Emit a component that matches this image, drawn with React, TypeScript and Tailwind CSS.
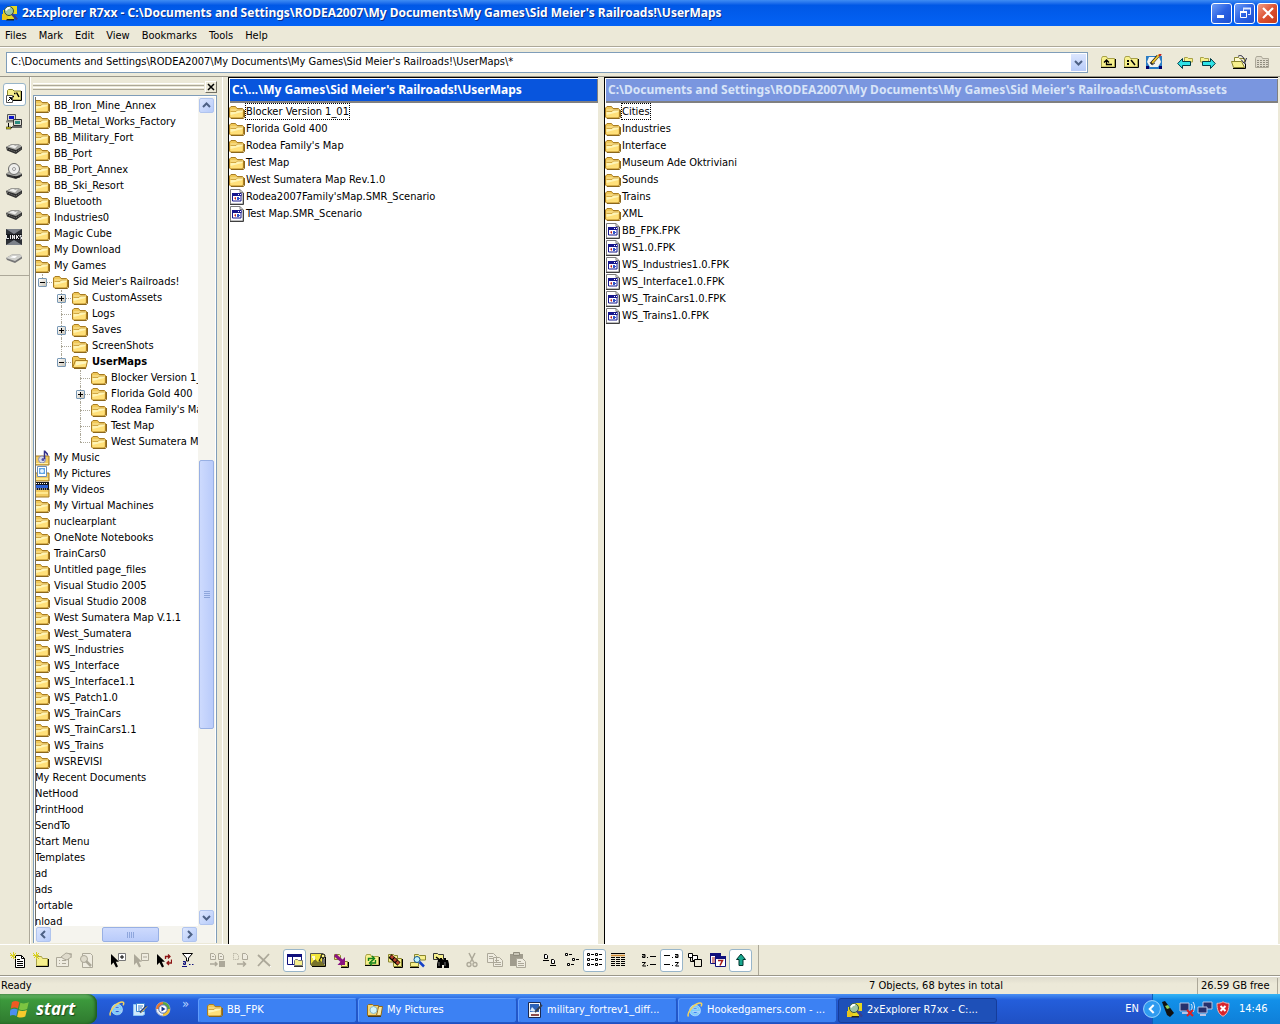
import { useState } from "react";
import type { ReactNode } from "react";
import clsx from "clsx";

type IconProps = { className?: string };

function Svg({ children, className, size = 16 }: IconProps & { children: ReactNode; size?: number }) {
  return (
    <svg
      aria-hidden
      width={size}
      height={size}
      viewBox="0 0 16 16"
      fill="none"
      className={clsx("shrink-0", className)}
    >
      {children}
    </svg>
  );
}

/* ---------- folder and file icons ---------- */

function FolderIcon({ className }: IconProps) {
  return (
    <Svg className={className}>
      <path d="M.5 13V4l1.5-1.500h4.500l1.500 2h5.500l1 1V13l-1 1h-12z" fill="#f0c857" stroke="#a97d22" />
      <path d="M1.500 5.500h12v1h-12z" fill="#fbe9a4" />
      <path d="M1.500 7.500h5.500l1.500-1.500h5v6l-.8 1.300H1.500z" fill="#ffe07a" />
      <path d="M1.500 7.500h5.500l1.500-1.500h5v2l-12 3z" fill="#fff4b4" />
      <path d="M1.500 7.500h5.500l1.500-1.500h5" stroke="#c6982f" strokeWidth=".8" />
      <path d="M2 14.500h12.500l1-1V6" stroke="#8a661c" />
    </Svg>
  );
}

function OpenFolderIcon({ className }: IconProps) {
  return (
    <Svg className={className}>
      <path d="M.5 13V3.500l1-1h4.500L7.500 4.500h6V7" fill="#f0c857" stroke="#a97d22" />
      <path d="M.7 13.500 3.500 6.500h12l-1.500 7z" fill="#ffe07a" stroke="#a97d22" />
      <path d="M4 7.500h10.500l-.5 2-10.500 2z" fill="#fff7c2" />
      <path d="M2 14.500h12" stroke="#8a661c" />
    </Svg>
  );
}

function MusicFolderIcon() {
  return (
    <Svg>
      <path d="M1 6h14v9H1z" fill="#f2cc62" stroke="#a57b23" />
      <circle cx="8" cy="9.500" r="3.500" fill="#d9dcec" stroke="#8d8fae" />
      <path d="M10.500 9V.5c0 2 3.500 2 3 5" stroke="#34318a" strokeWidth="1.500" />
      <circle cx="9" cy="9.500" r="1.500" fill="#5551a8" />
      <path d="M2 13h12v1H2z" fill="#fff0a8" />
    </Svg>
  );
}

function PicturesFolderIcon() {
  return (
    <Svg>
      <path d="M1 7h14v8H1z" fill="#f2cc62" stroke="#a57b23" />
      <path d="M3.500 .5h9v10h-9z" fill="#fff" stroke="#6d8eb5" />
      <path d="M5 2h6v6H5z" fill="#5fa5e6" />
      <circle cx="8" cy="5" r="2" fill="#e8f4ff" />
      <path d="M2 12h12v2H2z" fill="#ffe890" />
    </Svg>
  );
}

function VideosFolderIcon() {
  return (
    <Svg>
      <path d="M1 7h14v8H1z" fill="#f2cc62" stroke="#a57b23" />
      <path d="M1 0h14v8H1z" fill="#15161c" />
      <path d="M2 3h12v3H2z" fill="#2f62d6" />
      <path d="M2 1.500h12M2 7h12" stroke="#fff" strokeDasharray="1 1" />
      <path d="M2 10h12v2H2z" fill="#ffe890" />
    </Svg>
  );
}

function ScenarioFileIcon({ className }: IconProps) {
  return (
    <Svg className={className}>
      <path d="M1.500 .5h9.500l3 3v11.500h-12.500z" fill="#fff" stroke="#7c7c7c" />
      <path d="M11 .5v3h3" stroke="#7c7c7c" />
      <path d="M14.500 4v11.500H1" stroke="#3f3f3f" />
      <path d="M3.500 4.500h8.500v7.500h-8.500z" fill="#fff" stroke="#16168c" />
      <path d="M3 4h9.500v3H3z" fill="#16168c" />
      <path d="M9 5h1v1H9zM11 5h1v1h-1z" fill="#fff" />
      <path d="M5 9l2-1v3z" fill="#c02020" />
      <path d="M8 8h2v3H8zM10 9h1v1h-1z" fill="#2f52c8" />
    </Svg>
  );
}

/* ---------- shortcut bar icons ---------- */

function BookmarkIcon() {
  return (
    <Svg>
      <path d="M1.500 12V3.500l1-1h4L8 4h7v9H2z" fill="#f7f08c" stroke="#8a8630" />
      <path d="M15.500 4v9.500H6" stroke="#000" />
      <path d="M8 6.500h1.500M10.500 5.500l2.500 4.500M7 9.500h1" stroke="#000" strokeWidth="1.500" />
      <path d="M.5 8.500h6v7h-6z" fill="#fff" stroke="#555" />
      <path d="M2 14l3-3M3 10.500h2.500V13" stroke="#000" />
    </Svg>
  );
}

function NetworkIcon() {
  return (
    <Svg>
      <path d="M1.500 .5h8v6h-8z" fill="#d8d8d0" stroke="#555" />
      <path d="M3 2h5v3H3z" fill="#0a12c8" />
      <path d="M0 7.500h10" stroke="#8a8a80" strokeWidth="2" />
      <path d="M7.500 5.500h8v6h-8z" fill="#d8d8d0" stroke="#333" />
      <path d="M9 7h5v3H9z" fill="#2c8c80" />
      <path d="M6 13h10" stroke="#666" strokeWidth="2" />
      <path d="M2.500 9v4.500H6" stroke="#000" />
      <path d="M0 13h5v2H0z" fill="#d6d02c" stroke="#000" strokeWidth=".5" />
    </Svg>
  );
}

function DriveIcon() {
  return (
    <Svg>
      <path d="M0 6l5-2.500h8l3 2v3L10 13 1 9.500z" fill="#2e2e2e" />
      <path d="M0 6l5-2.500h8l3 2L10 9z" fill="#a9a9a5" />
      <path d="M3 5.500l3-1.500h2l1 1 3-1-3 3.500z" fill="#ececea" />
      <path d="M1 7.500l8.500 3.500 6-3.500" stroke="#7f7f7c" strokeDasharray="1 1" />
    </Svg>
  );
}

function CdDriveIcon() {
  return (
    <Svg>
      <path d="M0 11l4-3h8l4 3v2l-6 3-9-2.500z" fill="#333" />
      <path d="M0 11l4-3h8l4 3-6 2.500z" fill="#a9a9a5" />
      <circle cx="8" cy="6" r="5.500" fill="#eeeeec" stroke="#6a6a68" />
      <circle cx="8" cy="6" r="1.500" fill="#fff" stroke="#999" />
      <path d="M8 14h6" stroke="#111" />
    </Svg>
  );
}

function LinksysIcon() {
  return (
    <Svg>
      <path d="M0 0h16v16H0z" fill="#2d3036" />
      <path d="M0 0l8 5 8-5zM0 16l8-5 8 5z" fill="#7d828a" />
      <path d="M0 5h16v6H0z" fill="#15171b" />
      <path d="M.5 6v3.500H3M4.500 6v4M6.500 10V6l2 4V6M10.500 6v4M13 6l-2 2 2 2M15.500 6.500h-1.500V8h1.500v2H14" stroke="#fff" strokeWidth=".9" />
    </Svg>
  );
}

function RemovableIcon() {
  return (
    <Svg>
      <path d="M0 7l6-3.500h8l2 2v2L9 12 1 9z" fill="#777" />
      <path d="M0 7l6-3.500h8l2 2L9 10z" fill="#d0d0cc" />
      <path d="M4 6.500l3-1.500h4l-2 2z" fill="#fff" />
    </Svg>
  );
}

/* ---------- toolbar icons ---------- */

const yellow = "#f7f08c";
const dim = "#aca899";

function YellowFolder({ children }: { children?: ReactNode }) {
  return (
    <Svg>
      <path d="M1.500 13V4.500l1-2h4l1 2h7V13z" fill={yellow} stroke="#a8a24a" />
      <path d="M1 13.500h14.500V5" stroke="#000" />
      {children}
    </Svg>
  );
}

const UpFolderIcon = () => (
  <YellowFolder>
    <path d="M6.500 6v4.500H12M4 8.500l2.500-2.500L9 8.500" stroke="#000" strokeWidth="1.300" />
  </YellowFolder>
);

const RootFolderIcon = () => (
  <YellowFolder>
    <path d="M4 6h2v2H4zM4 9h2v2H4z" fill="#000" />
    <path d="M8 6l4 5" stroke="#000" strokeWidth="1.500" />
  </YellowFolder>
);

const DesktopIcon = () => (
  <Svg>
    <path d="M0 2h16v13H0z" fill="#2a7cc4" />
    <path d="M0 12h3v3H0zM13 12h3v3h-3z" fill="#00006a" />
    <path d="M3 3h10l2 5-3 5H4L1 8z" fill="#f5f5f0" />
    <path d="M5 10l7-8" stroke="#000" strokeWidth="3" />
    <path d="M6 9l8-9" stroke="#e8c030" strokeWidth="2" />
    <path d="M13 2l2-2" stroke="#c02020" strokeWidth="2" />
    <path d="M4 8l2 3 3-2" stroke="#555" />
  </Svg>
);

const BackIcon = () => (
  <Svg>
    <path d="M7.500 8V3.500h3l1 1h4V8z" fill={yellow} stroke="#a8a24a" />
    <path d="M.7 9.500 5.500 4.500v3h8v4h-8v3z" fill="#2fe3e6" stroke="#003c46" />
  </Svg>
);

const ForwardIcon = () => (
  <Svg>
    <path d="M.5 8V3.500h3l1 1h4V8z" fill={yellow} stroke="#a8a24a" />
    <path d="M15.300 9.500 10.500 4.500v3h-8v4h8v3z" fill="#2fe3e6" stroke="#003c46" />
  </Svg>
);

const HistoryIcon = () => (
  <Svg>
    <path d="M3.500 8V3.500h4l1 1h5V8" fill="#fffbd0" stroke="#8a8630" />
    <path d="M7 2.500c2-2 5-1 6 3M15.500 4l-2 5.500L10 5.500" stroke="#1c1c3c" />
    <path d="M2.500 13.500l-2-6h10l3 6z" fill={yellow} stroke="#8a8630" />
    <path d="M2 14.500h12.500v-5" stroke="#000" />
  </Svg>
);

const GridFolderIcon = () => (
  <Svg>
    <path d="M1.500 13.500v-9l1-2h5l1 2h6v9z" fill="#e0dccd" stroke={dim} />
    <path d="M3 6.500h11M3 8.500h11M3 10.500h11M3 12.500h11" stroke="#918e80" strokeDasharray="2 1" />
  </Svg>
);

const NewFileIcon = () => (
  <Svg>
    <path d="M5.500 3.500h6l3 3v9h-9z" fill="#fff" stroke="#000" />
    <path d="M11.500 3.500v3h3M7 7.500h3M7 9.500h6M7 11.500h6M7 13.500h6" stroke="#000" />
    <path d="M0 1l6 6M6 1 1 6M3.500 0v7M0 3.500h6" stroke="#d8d020" />
  </Svg>
);

const NewFolderIcon = () => (
  <Svg>
    <path d="M3.500 14V6.500l1-2h4l1 2h5V14z" fill={yellow} stroke="#a8a24a" />
    <path d="M3 14.500h12.500V7" stroke="#000" />
    <path d="M0 1l6 6M6 1 1 6M3.500 0v7M0 3.500h6" stroke="#d8d020" />
  </Svg>
);

const PropertiesIcon = () => (
  <Svg>
    <path d="M.5 5.500h12v9H.5z" fill="#efece0" stroke={dim} />
    <path d="M3 8.500h1M6 8.500h4M3 11.500h1M6 11.500h4" stroke={dim} />
    <path d="M5 5l5-4 5 1v3l-4 3-3-1z" fill="#dedacb" stroke={dim} />
    <path d="M13 2h3v4" stroke={dim} />
  </Svg>
);

const ViewFileIcon = () => (
  <Svg>
    <path d="M3.500 1.500h8l2 2v12h-10z" fill="#efece0" stroke={dim} />
    <circle cx="5" cy="7" r="3.500" fill="#dedacb" stroke={dim} />
    <path d="M7 9l5 5" stroke={dim} strokeWidth="2.500" />
  </Svg>
);

const pointer = "M1 2v11l2.500-2.500L6 15.500l2-1L5.800 9.800H9z";

const SelectIcon = () => (
  <Svg>
    <path d={pointer} fill="#000" />
    <path d="M8.500 1.500h7v7h-7z" fill="#fff" stroke="#777" />
    <path d="M10 5h4M12 3v4" stroke="#000" />
  </Svg>
);

const UnselectIcon = () => (
  <Svg>
    <path d={pointer} fill={dim} />
    <path d="M8.500 1.500h7v7h-7z" fill="#efece0" stroke={dim} />
    <path d="M10 5h4" stroke={dim} />
  </Svg>
);

const InvertIcon = () => (
  <Svg>
    <path d={pointer} fill="#000" />
    <path d="M9.500 7V4.500h4M12 2.500l2 2-2 2M15.500 7.500v3.500h-4M13 9l-2 2 2 2" stroke="#8c1414" strokeWidth="1.300" />
  </Svg>
);

const FilterIcon = () => (
  <Svg>
    <path d="M3.500 1.500h10l-4 4.500v3h-2v-3z" fill="#fff" stroke="#000" />
    <path d="M4 9.500h2.500v3H4.500v-1.500h2M3 14.500h5M10 12.500h1.500M13 12.500h1.500" stroke="#10107c" />
  </Svg>
);

const CopyToIcon = () => (
  <Svg>
    <path d="M.5 1.500h3l2 2v4h-5zM8.500 1.500h3l2 2v4h-5z" fill="#efece0" stroke={dim} />
    <path d="M2 4.500h2M10 4.500h2" stroke={dim} />
    <path d="M0 12h7M5 10l2 2-2 2" stroke={dim} strokeWidth="1.500" />
    <path d="M9 9h6v6H9z" fill={dim} />
  </Svg>
);

const MoveToIcon = () => (
  <Svg>
    <path d="M.5 1.500h3l2 2v4h-5z" stroke={dim} strokeDasharray="1 1" />
    <path d="M9.500 1.500h3l2 2v4h-5z" fill="#efece0" stroke={dim} />
    <path d="M4 12h8M10 9.500l2.500 2.500-2.500 2.500" stroke={dim} strokeWidth="1.500" />
  </Svg>
);

const DeleteIcon = () => (
  <Svg>
    <path d="M3 4l12 11" stroke="#fff" strokeWidth="1" />
    <path d="M2 3l12 11M13 2 2 14" stroke={dim} strokeWidth="1.800" />
  </Svg>
);

const TreeViewIcon = () => (
  <Svg>
    <path d="M.5 2.500h14v10H.5z" fill="#fff" stroke="#10107c" />
    <path d="M0 2h15v3H0z" fill="#10107c" />
    <path d="M5.500 5v7" stroke="#10107c" />
    <path d="M7.500 13.500v-5l1-1h2l1 1h4v5z" fill={yellow} stroke="#777" />
    <path d="M7 14.500h9" stroke="#333" />
  </Svg>
);

const PreviewIcon = () => (
  <Svg>
    <path d="M.5 1.500h12v11H.5z" fill="#f2e53a" stroke="#555" />
    <path d="M1 12l4-5 3 3 2-2 5 5v1H1z" fill="#77722a" />
    <path d="M2 5h3M3 7h2" stroke="#fffbd0" strokeWidth="2" />
    <path d="M9 9l3-6 2 4v5" stroke="#000" />
    <circle cx="13" cy="4" r="2" fill="#fff58c" stroke="#000" />
    <path d="M2 14.500h13.500V5" stroke="#000" />
  </Svg>
);

const ExtractIcon = () => (
  <Svg>
    <path d="M1.500 7.500v-5h5l1 1v4zM8.500 14.500v-5h6v5z" fill={yellow} stroke="#8a8630" />
    <path d="M15.500 10v5.500H8" stroke="#000" />
    <path d="M2 3l8 7" stroke="#8a1480" strokeWidth="3" />
    <path d="M12 5v8H4.500z" fill="#8a1480" />
  </Svg>
);

const RefreshIcon = () => (
  <YellowFolder>
    <path d="M4.500 9V6.500h5M8 4l2.500 2.500L8 9M11.500 8v3h-5M8 8.500 5.500 11l2.500 2.500" stroke="#108018" strokeWidth="1.400" />
  </YellowFolder>
);

const CompareIcon = () => (
  <Svg>
    <path d="M1.500 10V2.500h5l1 1h3V10zM6.500 14.500v-8h8v8z" fill={yellow} stroke="#8a8630" />
    <path d="M15.500 7v8.500H7" stroke="#000" />
    <path d="M3 4l9 8" stroke="#000" strokeWidth="4.500" />
    <path d="M4 4l8 8" stroke="#b8442c" strokeWidth="3" strokeDasharray="3 1" />
  </Svg>
);

const FindIcon = () => (
  <Svg>
    <path d="M4.500 8V2.500h4l1 1h6V8zM.5 14.500v-4h8v4z" fill={yellow} stroke="#8a8630" />
    <path d="M0 15.500h9" stroke="#000" />
    <circle cx="7" cy="7.500" r="3" fill="#bff4ff" stroke="#14508c" />
    <path d="M9.500 10l4.500 4.500" stroke="#1440c8" strokeWidth="2.500" />
  </Svg>
);

const FindFilesIcon = () => (
  <Svg>
    <path d="M.5 7.500v-6h4l1 1h5v5z" fill={yellow} stroke="#333" />
    <path d="M3 5l4 3" stroke="#000" strokeWidth="1.500" />
    <path d="M5 8h2V6h2v2h2V6h2v2h2l1 4v4h-5v-3h-2v3H4v-4z" fill="#000" />
    <path d="M6 10v4M12 10v4" stroke="#777" />
  </Svg>
);

const CutIcon = () => (
  <Svg>
    <path d="M5 1l4.500 9M11 1 6.500 10" stroke={dim} strokeWidth="1.500" />
    <circle cx="5" cy="12.500" r="2" stroke={dim} strokeWidth="1.300" />
    <circle cx="11" cy="12.500" r="2" stroke={dim} strokeWidth="1.300" />
  </Svg>
);

const CopyIcon = () => (
  <Svg>
    <path d="M.5 1.500h6l3 3v6h-9zM6.500 5.500h6l3 3v6h-9z" fill="#efece0" stroke={dim} />
    <path d="M2 4.500h4M2 6.500h4M8 8.500h4M8 10.500h6M8 12.500h6" stroke={dim} />
  </Svg>
);

const PasteIcon = () => (
  <Svg>
    <path d="M0 2h13v12H0z" fill="#a09c8d" />
    <path d="M3.500 .5h6v3h-6z" fill="#c9c5b6" stroke="#8f8b7c" />
    <path d="M6.500 6.500h6l3 3v6h-9z" fill="#efece0" stroke={dim} />
    <path d="M8 9.500h3M8 11.500h6M8 13.500h6" stroke={dim} />
  </Svg>
);

const LargeIconsIcon = () => (
  <Svg>
    <path d="M3.500 2.500h2l1 1v3h-3zM10.500 7.500h2l1 1v3h-3z" fill="#fff" stroke="#000" />
    <path d="M2 8.500h6M9 13.500h6" stroke="#000" />
  </Svg>
);

const SmallIconsIcon = () => (
  <Svg>
    <path d="M1.500 1.500h2v2h-2zM8.500 6.500h2v2h-2zM3.500 11.500h2v2h-2z" fill="#fff" stroke="#000" />
    <path d="M5 2.500h3M12 7.500h3M7 12.500h3" stroke="#000" />
  </Svg>
);

const ListViewIcon = () => (
  <Svg>
    {[1, 6, 11].map((y) => (
      <g key={y} transform={`translate(0 ${y})`} stroke="#000">
        <path d="M.5 .5h2v2h-2zM8.500 .5h2v2h-2z" />
        <path d="M4 1.500h3M12 1.500h3" />
      </g>
    ))}
  </Svg>
);

const DetailsViewIcon = () => (
  <Svg>
    <path d="M1 1.500h14" stroke="#000" />
    <path d="M1 3.500h14" stroke="#d08830" strokeWidth="1.500" />
    <path d="M1 5.500h14M1 7.500h14M1 9.500h14M1 11.500h14M1 13.500h14" stroke="#000" strokeDasharray="4 1" />
  </Svg>
);

const letterA = "M0 1.500h3v3H.5V3H3";
const letterZ = "M0 .5h3.500L.5 4H4";

const SortAscIcon = () => (
  <Svg>
    <g stroke="#000">
      <path d={letterA} transform="translate(1 1)" />
      <path d={letterZ} transform="translate(1 10)" />
      <path d="M6 5.500h1M9 4.500h6M6 13.500h1M9 12.500h6" />
    </g>
  </Svg>
);

const SortDescIcon = () => (
  <Svg>
    <g stroke="#000">
      <path d={letterA} transform="translate(11 1)" />
      <path d={letterZ} transform="translate(11 10)" />
      <path d="M0 3.500h6M8 5.500h1M0 12.500h6M8 13.500h1" />
    </g>
  </Svg>
);

const SyncPanesIcon = () => (
  <Svg>
    <path d="M1.500 1.500h4v4h-4zM5.500 3.500h5v5h-5z" fill="#fff" stroke="#000" />
    <path d="M7.500 7.500h7v7h-7z" fill="#ece9d8" stroke="#000" />
    <path d="M3.500 5.500v4h4" stroke="#000" />
  </Svg>
);

const CalendarIcon = () => (
  <Svg>
    <path d="M.5 1.500h10v10H.5z" fill="#fff" stroke="#10107c" />
    <path d="M0 1h11v3H0z" fill="#10107c" />
    <path d="M2 6h3M2 8h3M2 10h3" stroke="#a01818" />
    <path d="M5.500 4.500h10v10h-10z" fill="#fff" stroke="#10107c" />
    <path d="M5 4h11v3H5z" fill="#10107c" />
    <path d="M8 8.500h4.500l-2.500 5" stroke="#a01818" strokeWidth="1.500" />
  </Svg>
);

const ArrowUpIcon = () => (
  <Svg>
    <path d="M8 2 12.500 7.500h-2.500v6H6v-6H3.500z" fill="#18a890" stroke="#00332c" />
  </Svg>
);

/* ---------- logos ---------- */

function AppIcon() {
  return (
    <Svg>
      <path d="M1 5h6V1h8v8h-3v5H1z" fill="#e8d820" />
      <path d="M0 9h6v6H0z" fill="#e8c41c" />
      <path d="M5 14h7v1.500H4z" fill="#222" />
      <circle cx="7" cy="6" r="4.500" fill="#9fc5a5" stroke="#31523c" />
      <path d="M4 5.500C4.500 3 7 2.500 8 3" stroke="#fff" strokeWidth="2" />
      <path d="M10 9l5 5.500" stroke="#3a3f8c" strokeWidth="2.500" />
    </Svg>
  );
}

function WindowsFlag() {
  return (
    <Svg size={20}>
      <path d="M1.500 2.500C3.500 1.300 5.500 1.500 7.500 2.500L6.300 7.500C4.500 6.600 2.700 6.600.7 7.600z" fill="#ee5a24" />
      <path d="M8.300 2.900c2 .9 4 .9 6.700-.5L13.700 8c-2 1.100-4.400 1.100-6.600.1z" fill="#7cc441" />
      <path d="M.4 8.500c2-1 3.800-1 5.700-.1L5 13.500c-1.800-.9-3.600-.9-5.800.2z" fill="#4b8ff0" />
      <path d="M6.900 9c2 .9 4.400.9 6.600-.2L12.200 14c-2.200 1.100-4.400 1-6.600.1z" fill="#f8ca2c" />
    </Svg>
  );
}

function IeIcon() {
  return (
    <Svg>
      <path
        d="M13.500 9.500H5.800c.3 2.300 3.400 2.800 4.700.8h2.800c-1.600 5.200-10.600 4.800-10.600-2C2.700 1.300 13.800 1 13.500 9.500zM5.800 7.200h4.700C10 4.800 6.300 4.800 5.800 7.200z"
        fill="#7ccbfa"
        stroke="#d2ecff"
        strokeWidth=".6"
      />
      <path d="M1.500 14.500C-.5 12 5 3.500 11.500 1.300c3-1 4 .7 2.500 3" stroke="#f4d25c" strokeWidth="1.500" />
    </Svg>
  );
}

const ShowDesktopIcon = () => (
  <Svg>
    <path d="M1.500 3.500h11v10l-2 1h-9z" fill="#cfe8fb" stroke="#8cc4f4" />
    <path d="M4.500 2.500h8v8h-8z" fill="#fff" stroke="#3c88d4" />
    <path d="M6 5h5M6 7h4M6 9h2" stroke="#2f78c8" />
    <path d="M8 11.500l6.500-6.500" stroke="#1c3f8c" strokeWidth="2" />
    <path d="M9 11.500l6-6" stroke="#f0c040" />
  </Svg>
);

const MediaPlayerIcon = () => (
  <Svg>
    <circle cx="8" cy="8" r="7" fill="#e8eef8" stroke="#8fa4cc" />
    <path d="M8 1a7 7 0 0 1 7 7h-3a4 4 0 0 0-4-4z" fill="#5aa83c" />
    <path d="M1 8a7 7 0 0 1 7-7v3a4 4 0 0 0-4 4z" fill="#e8762c" />
    <path d="M8 15a7 7 0 0 0 7-7h-3a4 4 0 0 1-4 4z" fill="#f0c030" />
    <circle cx="8" cy="8" r="4.200" fill="#fff" stroke="#4a6cb0" />
    <path d="M6.500 5.500v5l4-2.500z" fill="#14348c" />
  </Svg>
);

const PictureFolderIcon = () => (
  <Svg>
    <path d="M.5 13.500v-10l1-1h4l1 1h5v10z" fill="#f6d777" stroke="#8f6a1d" />
    <path d="M9.500 13.500l2-9h4l-1.500 9z" fill="#fbe9a0" stroke="#8f6a1d" />
    <circle cx="6.500" cy="8" r="3.500" fill="#d2f4fa" stroke="#8cb8c4" />
    <path d="M1 14.500h13" stroke="#4a3a18" />
  </Svg>
);

const PaintDocIcon = () => (
  <Svg>
    <path d="M1.500 .5h12v15h-12z" fill="#f4f6fa" stroke="#1b2850" />
    <path d="M3 2h9v8H3z" fill="#2c62b8" />
    <path d="M3 9l2-4 5 5z" fill="#d8e8f8" />
    <path d="M8 10l7-7" stroke="#38404f" strokeWidth="1.800" />
    <path d="M4 13h8" stroke="#8c4a4a" strokeWidth="2" />
  </Svg>
);

/* ---------- controls ---------- */

type ToolProps = { label: string; icon: ReactNode; pressed?: boolean; disabled?: boolean };

function ToolButton({ label, icon, pressed, disabled }: ToolProps) {
  return (
    <button
      type="button"
      title={label}
      aria-label={label}
      aria-pressed={pressed}
      disabled={disabled}
      className={clsx(
        "flex h-[23px] w-[23px] shrink-0 items-center justify-center rounded-[3px] border",
        pressed ? "border-[#98b5c9] bg-white" : "border-transparent"
      )}
    >
      {icon}
    </button>
  );
}

function ToolGroups({ groups }: { groups: ToolProps[][] }) {
  return (
    <div className="flex gap-2">
      {groups.map((group, i) => (
        <div key={i} className="flex">
          {group.map((tool) => (
            <ToolButton key={tool.label} {...tool} />
          ))}
        </div>
      ))}
    </div>
  );
}

type Direction = "up" | "down" | "left" | "right";

const chevrons: Record<Direction, string> = {
  up: "M1 6l3.500-3.500L8 6",
  down: "M1 3l3.500 3.500L8 3",
  left: "M6 1 2.500 4.500 6 8",
  right: "M3 1l3.500 3.500L3 8",
};

function Chevron({ dir }: { dir: Direction }) {
  return (
    <svg aria-hidden width="9" height="9" viewBox="0 0 9 9" fill="none">
      <path d={chevrons[dir]} stroke="#4d6185" strokeWidth="2" />
    </svg>
  );
}

function ScrollButton({ dir }: { dir: Direction }) {
  return (
    <button
      type="button"
      aria-label={`Scroll ${dir}`}
      className="flex h-[15px] w-[15px] shrink-0 items-center justify-center rounded-[2px] border border-[#b0c4ee] bg-gradient-to-br from-[#dce6fe] to-[#b7cbf9]"
    >
      <Chevron dir={dir} />
    </button>
  );
}

/* ---------- data ---------- */

type TreeItem = {
  name: string;
  level: number;
  kind?: "folder" | "open" | "music" | "pictures" | "videos" | "none";
  expander?: "+" | "-";
  last?: boolean;
};

const flat = (names: string[]): TreeItem[] => names.map((name) => ({ name, level: 0 }));

const tree: TreeItem[] = [
  ...flat([
    "BB_Iron_Mine_Annex",
    "BB_Metal_Works_Factory",
    "BB_Military_Fort",
    "BB_Port",
    "BB_Port_Annex",
    "BB_Ski_Resort",
    "Bluetooth",
    "Industries0",
    "Magic Cube",
    "My Download",
    "My Games",
  ]),
  { name: "Sid Meier's Railroads!", level: 1, expander: "-", last: true },
  { name: "CustomAssets", level: 2, expander: "+" },
  { name: "Logs", level: 2 },
  { name: "Saves", level: 2, expander: "+" },
  { name: "ScreenShots", level: 2 },
  { name: "UserMaps", level: 2, expander: "-", kind: "open", last: true },
  { name: "Blocker Version 1_01", level: 3 },
  { name: "Florida Gold 400", level: 3, expander: "+" },
  { name: "Rodea Family's Map", level: 3 },
  { name: "Test Map", level: 3 },
  { name: "West Sumatera Map Rev.1.0", level: 3, last: true },
  { name: "My Music", level: 0, kind: "music" },
  { name: "My Pictures", level: 0, kind: "pictures" },
  { name: "My Videos", level: 0, kind: "videos" },
  ...flat([
    "My Virtual Machines",
    "nuclearplant",
    "OneNote Notebooks",
    "TrainCars0",
    "Untitled page_files",
    "Visual Studio 2005",
    "Visual Studio 2008",
    "West Sumatera Map V.1.1",
    "West_Sumatera",
    "WS_Industries",
    "WS_Interface",
    "WS_Interface1.1",
    "WS_Patch1.0",
    "WS_TrainCars",
    "WS_TrainCars1.1",
    "WS_Trains",
    "WSREVISI",
  ]),
  ...[
    "My Recent Documents",
    "NetHood",
    "PrintHood",
    "SendTo",
    "Start Menu",
    "Templates",
    "ad",
    "ads",
    "'ortable",
    "nload",
  ].map((name): TreeItem => ({ name, level: 0, kind: "none" })),
];

const leftFiles = [
  "Blocker Version 1_01",
  "Florida Gold 400",
  "Rodea Family's Map",
  "Test Map",
  "West Sumatera Map Rev.1.0",
  "Rodea2007Family'sMap.SMR_Scenario",
  "Test Map.SMR_Scenario",
];

const rightFiles = [
  "Cities",
  "Industries",
  "Interface",
  "Museum Ade Oktriviani",
  "Sounds",
  "Trains",
  "XML",
  "BB_FPK.FPK",
  "WS1.0.FPK",
  "WS_Industries1.0.FPK",
  "WS_Interface1.0.FPK",
  "WS_TrainCars1.0.FPK",
  "WS_Trains1.0.FPK",
];

const navTools: ToolProps[][] = [
  [
    { label: "Up one level", icon: <UpFolderIcon /> },
    { label: "Root folder", icon: <RootFolderIcon /> },
    { label: "Desktop", icon: <DesktopIcon /> },
  ],
  [
    { label: "Back", icon: <BackIcon /> },
    { label: "Forward", icon: <ForwardIcon /> },
  ],
  [
    { label: "History", icon: <HistoryIcon /> },
    { label: "Folder grid", icon: <GridFolderIcon />, disabled: true },
  ],
];

const fileTools: ToolProps[][] = [
  [
    { label: "New file", icon: <NewFileIcon /> },
    { label: "New folder", icon: <NewFolderIcon /> },
    { label: "Properties", icon: <PropertiesIcon />, disabled: true },
    { label: "View", icon: <ViewFileIcon />, disabled: true },
  ],
  [
    { label: "Select", icon: <SelectIcon /> },
    { label: "Unselect", icon: <UnselectIcon />, disabled: true },
    { label: "Invert selection", icon: <InvertIcon /> },
    { label: "Filter", icon: <FilterIcon /> },
  ],
  [
    { label: "Copy to", icon: <CopyToIcon />, disabled: true },
    { label: "Move to", icon: <MoveToIcon />, disabled: true },
    { label: "Delete", icon: <DeleteIcon />, disabled: true },
  ],
  [
    { label: "Tree", icon: <TreeViewIcon />, pressed: true },
    { label: "Preview", icon: <PreviewIcon /> },
    { label: "Extract", icon: <ExtractIcon /> },
  ],
  [
    { label: "Refresh", icon: <RefreshIcon /> },
    { label: "Compare", icon: <CompareIcon /> },
    { label: "Find", icon: <FindIcon /> },
    { label: "Find files", icon: <FindFilesIcon /> },
  ],
  [
    { label: "Cut", icon: <CutIcon />, disabled: true },
    { label: "Copy", icon: <CopyIcon />, disabled: true },
    { label: "Paste", icon: <PasteIcon />, disabled: true },
  ],
  [
    { label: "Large icons", icon: <LargeIconsIcon /> },
    { label: "Small icons", icon: <SmallIconsIcon /> },
    { label: "List", icon: <ListViewIcon />, pressed: true },
    { label: "Details", icon: <DetailsViewIcon /> },
  ],
  [
    { label: "Sort ascending", icon: <SortAscIcon /> },
    { label: "Sort descending", icon: <SortDescIcon />, pressed: true },
    { label: "Sort by size", icon: <SyncPanesIcon /> },
    { label: "Sort by date", icon: <CalendarIcon /> },
    { label: "Direction", icon: <ArrowUpIcon />, pressed: true },
  ],
];

/* ---------- window parts ---------- */

function TitleBar() {
  const base = "flex h-[21px] w-[21px] items-center justify-center rounded-[3px] border border-white";
  const blue = "bg-gradient-to-br from-[#6f9cf5] via-[#2c63e4] to-[#1c4fd0]";
  return (
    <header className="flex h-[26px] shrink-0 items-center gap-1 bg-gradient-to-b from-[#3f8cf3] via-[#0058e6] via-20% to-[#0462f5] pr-0.5 pl-0.5">
      <AppIcon />
      <h1 className="flex-1 truncate font-[Noto_Sans,sans-serif] text-[12px] leading-4 font-bold text-white [text-shadow:1px_1px_#0a2f8c]">
        2xExplorer R7xx - C:\Documents and Settings\RODEA2007\My Documents\My Games\Sid Meier's Railroads!\UserMaps
      </h1>
      <div className="flex gap-0.5">
        <button type="button" aria-label="Minimize" className={clsx(base, blue)}>
          <Svg>
            <path d="M3 10h7v3H3z" fill="#fff" />
          </Svg>
        </button>
        <button type="button" aria-label="Restore" className={clsx(base, blue)}>
          <Svg>
            <path d="M6.500 6V3.500h7v6H11" stroke="#dfe9ff" />
            <path d="M6 3.500h8" stroke="#dfe9ff" strokeWidth="2" />
            <path d="M3.500 7.500h6v5h-6z" stroke="#fff" />
            <path d="M3 7h7" stroke="#fff" strokeWidth="2" />
          </Svg>
        </button>
        <button
          type="button"
          aria-label="Close"
          className={clsx(base, "bg-gradient-to-br from-[#ee9b84] via-[#dd5130] to-[#c43a1c]")}
        >
          <Svg>
            <path d="M3 3l10 10M13 3 3 13" stroke="#fff" strokeWidth="2.200" />
          </Svg>
        </button>
      </div>
    </header>
  );
}

function MenuBar() {
  return (
    <nav className="flex h-[21px] shrink-0 items-center gap-3 border-b border-[#aca899] px-[5px]">
      {["Files", "Mark", "Edit", "View", "Bookmarks", "Tools", "Help"].map((item) => (
        <button key={item} type="button">
          {item}
        </button>
      ))}
    </nav>
  );
}

function AddressBar() {
  const [path, setPath] = useState(
    "C:\\Documents and Settings\\RODEA2007\\My Documents\\My Games\\Sid Meier's Railroads!\\UserMaps\\*"
  );
  return (
    <div className="flex h-[30px] shrink-0 items-center gap-2 border-t border-b border-t-white border-b-[#9a978a] pr-[7px] pl-1.5">
      <div className="flex h-[21px] flex-1 border border-[#7f9db9] bg-white p-px">
        <input
          aria-label="Path"
          value={path}
          onChange={(e) => setPath(e.target.value)}
          className="min-w-0 flex-1 px-[3px] outline-none"
        />
        <button
          type="button"
          aria-label="Recent paths"
          className="flex w-[15px] items-center justify-center bg-gradient-to-b from-[#dce6fe] to-[#b7cbf9]"
        >
          <Chevron dir="down" />
        </button>
      </div>
      <ToolGroups groups={navTools} />
    </div>
  );
}

function ShortcutBar() {
  const drives = [
    { label: "Floppy drive", icon: <DriveIcon /> },
    { label: "CD drive", icon: <CdDriveIcon /> },
    { label: "Drive C", icon: <DriveIcon /> },
    { label: "Drive D", icon: <DriveIcon /> },
    { label: "Linksys", icon: <LinksysIcon /> },
    { label: "Removable drive", icon: <RemovableIcon /> },
  ];
  return (
    <div className="w-[30px] shrink-0 border-r border-[#aca899]">
      <div className="flex flex-col items-center gap-2 border-b border-[#aca899] pt-1.5 pr-px pb-2">
        <ToolButton label="Bookmarks" icon={<BookmarkIcon />} pressed />
        <button type="button" aria-label="Network">
          <NetworkIcon />
        </button>
        <div className="flex flex-col gap-1.5 pt-[3px]">
          {drives.map((d) => (
            <button key={d.label} type="button" aria-label={d.label}>
              {d.icon}
            </button>
          ))}
        </div>
      </div>
    </div>
  );
}

function TreeIcon({ kind }: { kind: TreeItem["kind"] }) {
  if (kind === "open") return <OpenFolderIcon />;
  if (kind === "music") return <MusicFolderIcon />;
  if (kind === "pictures") return <PicturesFolderIcon />;
  if (kind === "videos") return <VideosFolderIcon />;
  return <FolderIcon />;
}

function TreeRow({ item }: { item: TreeItem }) {
  if (item.kind === "none") {
    return <li className="-ml-px h-4 leading-4 whitespace-nowrap">{item.name}</li>;
  }
  return (
    <li className="-ml-0.5 flex h-4 items-center whitespace-nowrap">
      {item.level > 0 && (
        <span className={clsx("flex", item.level === 2 && "pl-[19px]", item.level === 3 && "pl-[38px]")}>
          {/* connector lines with the expander box on top */}
          <span className="relative block h-4 w-[19px]">
            <span
              className={clsx(
                "absolute top-0 left-2 border-l border-dotted border-[#aca899]",
                item.last ? "h-2" : "h-4"
              )}
            />
            <span className="absolute top-2 left-2 w-2.5 border-t border-dotted border-[#aca899]" />
            {item.expander && (
              <button
                type="button"
                aria-label={item.expander === "+" ? `Expand ${item.name}` : `Collapse ${item.name}`}
                className="absolute top-1 left-1 h-[9px] w-[9px] rounded-[1px] border border-[#7898b5] bg-gradient-to-br from-white to-[#c9c3b5]"
              >
                <svg aria-hidden width="7" height="7" viewBox="0 0 7 7">
                  <path d={item.expander === "+" ? "M1 3.500h5M3.500 1v5" : "M1 3.500h5"} stroke="#000" />
                </svg>
              </button>
            )}
          </span>
        </span>
      )}
      <TreeIcon kind={item.kind} />
      <span className={clsx("pl-1 leading-4", item.kind === "open" && "font-bold")}>{item.name}</span>
    </li>
  );
}

function TreePanel() {
  return (
    <aside className="flex w-[187px] shrink-0 flex-col border-l border-white pb-px pl-0.5">
      <div className="flex h-[18px] shrink-0 items-center gap-px pt-px">
        <div className="flex flex-1 flex-col gap-px">
          <div className="h-[3px] border-t border-b border-t-white border-b-[#aca899]" />
          <div className="h-[3px] border-t border-b border-t-white border-b-[#aca899]" />
        </div>
        <button
          type="button"
          aria-label="Close tree"
          className="flex h-3 w-3 items-center justify-center border border-t-white border-r-[#716f64] border-b-[#716f64] border-l-white"
        >
          <svg aria-hidden width="8" height="8" viewBox="0 0 8 8">
            <path d="M1 1l6 6M7 1 1 7" stroke="#000" strokeWidth="1.500" />
          </svg>
        </button>
      </div>
      <div className="flex min-h-0 flex-1 border border-b-0 border-[#7f9db9] bg-white pt-px pr-px pl-px">
        <div className="flex min-w-0 flex-1 flex-col">
          <ul className="min-h-0 flex-1 overflow-hidden border-l border-[#716f64] pt-px">
            {tree.map((item, i) => (
              <TreeRow key={i} item={item} />
            ))}
          </ul>
          <div className="flex h-[17px] shrink-0 items-center bg-[#f5f4ee] px-px">
            <ScrollButton dir="left" />
            <div className="mr-auto ml-[51px] flex h-[15px] w-[57px] items-center justify-center gap-px rounded-[2px] border border-[#98b0e4] bg-gradient-to-b from-[#cddafd] to-[#b9cbfa]">
              {[0, 1, 2, 3].map((n) => (
                <span key={n} className="h-1.5 w-px bg-[#8ea6dc]" />
              ))}
            </div>
            <ScrollButton dir="right" />
          </div>
        </div>
        <div className="flex w-[17px] shrink-0 flex-col items-center bg-[#f5f4ee] pt-px pb-[18px]">
          <ScrollButton dir="up" />
          <div className="flex-[347]" />
          <div className="flex w-[15px] flex-[268] flex-col items-center justify-center gap-px rounded-[2px] border border-[#98b0e4] bg-gradient-to-r from-[#cddafd] to-[#b9cbfa]">
            {[0, 1, 2, 3].map((n) => (
              <span key={n} className="h-px w-1.5 bg-[#8ea6dc]" />
            ))}
          </div>
          <div className="flex-[181]" />
          <ScrollButton dir="down" />
        </div>
      </div>
    </aside>
  );
}

type FilePaneProps = { path: string; files: string[]; active?: boolean; className: string };

function FilePane({ path, files, active, className }: FilePaneProps) {
  return (
    <section className={clsx("min-w-0 border-t border-l border-black bg-white pt-px", className)}>
      <h2
        className={clsx(
          "ml-px h-6 truncate border-r border-b-2 border-[#808080] pl-0.5 font-[Noto_Sans,sans-serif] text-[12px] leading-[22px] font-bold",
          active ? "bg-[#0855dd] text-white" : "bg-[#7a96df] text-[#d8e4f8]"
        )}
      >
        {path}
      </h2>
      <ul>
        {files.map((file, i) => (
          <li key={file} className="flex h-[17px] items-center whitespace-nowrap">
            {/\.(FPK|SMR_Scenario)$/.test(file) ? <ScenarioFileIcon /> : <FolderIcon />}
            <span
              className={clsx(
                "border border-dotted leading-[15px]",
                i === 0 ? "border-black" : "border-transparent"
              )}
            >
              {file}
            </span>
          </li>
        ))}
      </ul>
    </section>
  );
}

function StatusBar() {
  return (
    <footer className="flex h-[18px] shrink-0 items-center border-t border-white bg-gradient-to-b from-[#dedbcc] to-[#ece9d8] to-40% pt-px">
      <span className="flex-1 pl-px">Ready</span>
      <span className="w-[328px]">7 Objects, 68 bytes in total</span>
      <span className="mr-0.5 w-[81px] border-r border-l border-[#aca899] pl-[3px]">26.59 GB free</span>
    </footer>
  );
}

function TaskBar() {
  const tasks = [
    { title: "BB_FPK", icon: <FolderIcon /> },
    { title: "My Pictures", icon: <PictureFolderIcon /> },
    { title: "military_fortrev1_diff...", icon: <PaintDocIcon /> },
    { title: "Hookedgamers.com - ...", icon: <IeIcon /> },
    { title: "2xExplorer R7xx - C:...", icon: <AppIcon />, active: true },
  ];
  return (
    <div className="flex h-[30px] shrink-0 bg-gradient-to-b from-[#4a90f4] via-[#245edb] via-20% to-[#1f50c4] text-white">
      <button
        type="button"
        className="flex w-[97px] shrink-0 items-center gap-1.5 rounded-r-[9px] bg-gradient-to-b from-[#6cb96c] via-[#3c993c] via-20% to-[#2f7a2f] pl-2.5 shadow-[inset_-2px_0_3px_#1f5c1f]"
      >
        <WindowsFlag />
        <span className="font-[Open_Sans,sans-serif] text-[17px] leading-6 font-bold italic [text-shadow:1px_1px_1px_#1d4a1d]">
          start
        </span>
      </button>
      <div className="flex w-[101px] shrink-0 items-center gap-[7px] pl-3">
        <IeIcon />
        <ShowDesktopIcon />
        <MediaPlayerIcon />
        <button type="button" aria-label="More" className="ml-1 pb-3 text-[13px] leading-none text-[#b8d4ff]">
          »
        </button>
      </div>
      <div className="flex min-w-0 flex-1 items-center pt-0.5">
        {tasks.map((task) => (
          <button
            key={task.title}
            type="button"
            className={clsx(
              "mr-px flex h-[25px] w-[159px] items-center gap-1 rounded-[3px] border px-2 text-left",
              task.active
                ? "border-[#153c9a] bg-[#1e50b8]"
                : "border-t-[#5f9cfc] border-r-[#2458c4] border-b-[#2458c4] border-l-[#5f9cfc] bg-[#3c81f3]"
            )}
          >
            {task.icon}
            <span className="truncate">{task.title}</span>
          </button>
        ))}
      </div>
      <div className="flex items-center pr-[5px]">EN</div>
      <button
        type="button"
        aria-label="Show hidden icons"
        className="z-10 -mr-2 flex w-4 items-center justify-center"
      >
        <Svg size={18}>
          <circle cx="8" cy="8" r="7.500" fill="#2f9bf0" stroke="#a8dcff" strokeWidth=".8" />
          <path d="M9.500 4.500 6 8l3.500 3.500" stroke="#fff" strokeWidth="1.800" />
        </Svg>
      </button>
      <div className="flex w-32 shrink-0 items-center border-l border-[#0c5fb8] bg-gradient-to-b from-[#35b4f5] via-[#1290e9] via-20% to-[#0f7fd8] pl-[7px]">
        <Svg>
          <path d="M2 1l3-1 9 12-4 4-3-2z" fill="#111" />
          <path d="M5 5l3-1 2 3-3 1z" fill="#8ccf5a" />
        </Svg>
        <Svg className="ml-[3px]">
          <path d="M1 2h9v8H1z" fill="#26306c" stroke="#b8c4e4" />
          <path d="M3 12h6" stroke="#b8c4e4" strokeWidth="2" />
          <path d="M12 3c1.500 1.500 1.500 4 0 6M14 1c2 3 2 7 0 10" stroke="#e4ecff" />
          <path d="M8 9l6 6M14 9l-6 6" stroke="#e02020" strokeWidth="2" />
        </Svg>
        <Svg className="ml-0.5">
          <path d="M6 1h9v7H6z" fill="#26306c" stroke="#b8c4e4" />
          <path d="M1 6h9v6H1z" fill="#26306c" stroke="#b8c4e4" />
          <path d="M3 14h6" stroke="#b8c4e4" strokeWidth="2" />
        </Svg>
        <Svg className="ml-0.5">
          <path d="M8 .8c2 1.200 4 1.500 6 1.500 0 6-1 10.200-6 13-5-2.800-6-7-6-13 2 0 4-.3 6-1.500z" fill="#d8242c" stroke="#f0b4b4" />
          <path d="M5.500 5l5 5M10.500 5l-5 5" stroke="#fff" strokeWidth="2" />
        </Svg>
        <time className="ml-2">14:46</time>
      </div>
    </div>
  );
}

export default function App() {
  return (
    <div className="flex h-screen flex-col overflow-hidden bg-[#ece9d8] font-[DejaVu_Sans_Condensed,DejaVu_Sans,sans-serif] text-[11px] leading-4 text-black">
      <TitleBar />
      <MenuBar />
      <AddressBar />
      <main className="flex min-h-0 flex-1">
        <ShortcutBar />
        <TreePanel />
        <div className="ml-[5px] w-1.5 shrink-0 border-l border-white" />
        <FilePane
          path="C:\...\My Games\Sid Meier's Railroads!\UserMaps"
          files={leftFiles}
          active
          className="w-[370px] shrink-0"
        />
        <div className="w-1.5 shrink-0" />
        <FilePane
          path="C:\Documents and Settings\RODEA2007\My Documents\My Games\Sid Meier's Railroads!\CustomAssets"
          files={rightFiles}
          className="mr-0.5 flex-1"
        />
      </main>
      <div className="flex h-8 shrink-0 border-t border-b border-t-white border-b-[#9a978a] pl-1.5">
        <div className="flex items-center border-r border-[#aca899] pr-1.5">
          <ToolGroups groups={fileTools} />
        </div>
      </div>
      <StatusBar />
      <TaskBar />
    </div>
  );
}
